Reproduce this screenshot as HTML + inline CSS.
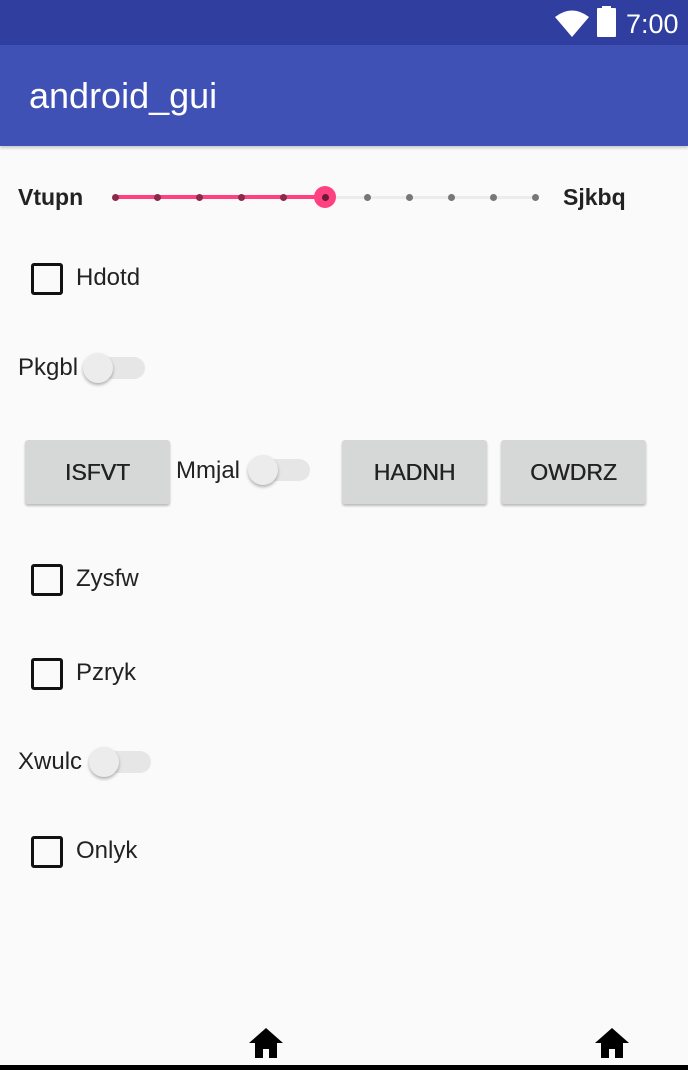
<!DOCTYPE html><html><head><style>
body{margin:0;width:688px;height:1070px;background:#fafafa;position:relative;overflow:hidden;font-family:"Liberation Sans",sans-serif;color:#222}
.a{position:absolute}
.t{position:absolute;font-size:24px;line-height:26px;white-space:nowrap}
.cb{position:absolute;left:31px;width:26px;height:26px;border:3px solid #111;border-radius:3px}
.tr{position:absolute;height:22px;border-radius:11px;background:#e6e6e6}
.th{position:absolute;width:30px;height:30px;border-radius:50%;background:#ececec;box-shadow:0 2px 3px rgba(0,0,0,.3)}
.btn{position:absolute;top:440px;height:64px;width:145px;background:#d6d7d7;border-radius:3px;box-shadow:0 2px 2px rgba(0,0,0,.25);font-size:23px;line-height:64px;text-align:center;color:#222;text-shadow:0.4px 0 0 #222}
.tk{position:absolute;top:194px;width:7px;height:7px;border-radius:50%;background:#777}
</style></head><body>
<div class="a" style="left:0;top:0;width:688px;height:45px;background:#303f9f"></div>
<svg class="a" style="left:554px;top:8px" width="36" height="30" viewBox="0 0 36 30"><path d="M1 9 Q18 -4 35 9 L18 29 Z" fill="#fff"/></svg>
<div class="a" style="left:597px;top:8px;width:19px;height:29px;background:#fff;border-radius:1px"></div>
<div class="a" style="left:602px;top:6px;width:9px;height:3px;background:#fff"></div>
<div class="t" style="left:626px;top:9px;color:#fff;font-size:27px;line-height:30px">7:00</div>
<div class="a" style="left:0;top:45px;width:688px;height:101px;background:#3f51b5;box-shadow:0 2px 3px rgba(0,0,0,.2)"></div>
<div class="t" style="left:29px;top:77px;color:#fff;font-size:36px;line-height:38px">android_gui</div>

<div class="t" style="left:18px;top:184px;font-weight:bold;font-size:23px">Vtupn</div>
<div class="t" style="left:563px;top:184px;font-weight:bold;font-size:23px">Sjkbq</div>
<div class="a" style="left:115px;top:196px;width:420px;height:3px;background:#ececec"></div>
<div class="a" style="left:115px;top:195px;width:210px;height:4px;background:#ff4081"></div>
<div class="tk" style="left:112px;background:#8a2a4a"></div><div class="tk" style="left:154px;background:#8a2a4a"></div><div class="tk" style="left:196px;background:#8a2a4a"></div><div class="tk" style="left:238px;background:#8a2a4a"></div><div class="tk" style="left:280px;background:#8a2a4a"></div>
<div class="tk" style="left:364px"></div><div class="tk" style="left:406px"></div><div class="tk" style="left:448px"></div><div class="tk" style="left:490px"></div><div class="tk" style="left:532px"></div>
<div class="a" style="left:314px;top:186px;width:22px;height:22px;border-radius:50%;background:#ff4081"></div>
<div class="a" style="left:322px;top:194px;width:7px;height:7px;border-radius:50%;background:#6a1a35"></div>

<div class="cb" style="top:263px"></div><div class="t" style="left:76px;top:265px">Hdotd</div>

<div class="t" style="left:18px;top:355px">Pkgbl</div>
<div class="tr" style="left:85px;top:357px;width:60px"></div>
<div class="th" style="left:83px;top:353px"></div>

<div class="btn" style="left:25px">ISFVT</div>
<div class="t" style="left:176px;top:458px">Mmjal</div>
<div class="tr" style="left:250px;top:459px;width:60px"></div>
<div class="th" style="left:248px;top:455px"></div>
<div class="btn" style="left:342px">HADNH</div>
<div class="btn" style="left:501px">OWDRZ</div>

<div class="cb" style="top:564px"></div><div class="t" style="left:76px;top:566px">Zysfw</div>
<div class="cb" style="top:658px"></div><div class="t" style="left:76px;top:660px">Pzryk</div>

<div class="t" style="left:18px;top:749px">Xwulc</div>
<div class="tr" style="left:91px;top:751px;width:60px"></div>
<div class="th" style="left:89px;top:747px"></div>

<div class="cb" style="top:836px"></div><div class="t" style="left:76px;top:838px">Onlyk</div>

<svg class="a" style="left:248px;top:1027px" width="36" height="32" viewBox="0 0 36 32"><path d="M18 1 L1 16 H7 V31 H15 V22 H21 V31 H29 V16 H35 Z" fill="#000"/></svg>
<svg class="a" style="left:594px;top:1027px" width="36" height="32" viewBox="0 0 36 32"><path d="M18 1 L1 16 H7 V31 H15 V22 H21 V31 H29 V16 H35 Z" fill="#000"/></svg>
<div class="a" style="left:0;top:1065px;width:688px;height:5px;background:#000"></div>
</body></html>
